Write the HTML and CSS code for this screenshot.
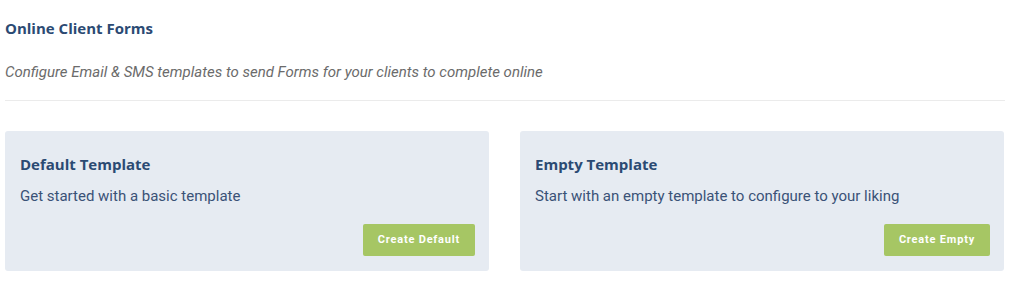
FILE: index.html
```html
<!DOCTYPE html>
<html>
<head>
<meta charset="utf-8">
<title>Online Client Forms</title>
<link rel="stylesheet" href="styles.css">
</head>
<body>
<div class="page">
	<h3 class="page-title">Online Client Forms</h3>
	<p class="page-desc">Configure Email &amp; SMS templates to send Forms for your clients to complete online</p>
	<div class="templates">
		<div class="tpl-card">
			<h4 class="tpl-title">Default Template</h4>
			<p class="tpl-text">Get started with a basic template</p>
			<div class="tpl-actions"><a href="javascript:void(0);" class="btn-green">Create Default</a></div>
		</div>
		<div class="tpl-card">
			<h4 class="tpl-title">Empty Template</h4>
			<p class="tpl-text">Start with an empty template to configure to your liking</p>
			<div class="tpl-actions"><a href="javascript:void(0);" class="btn-green">Create Empty</a></div>
		</div>
	</div>
</div>
</body>
</html>
```

FILE: styles.css
```css
body{margin:0;padding:0;background:#fff;font-family:Roboto,"Liberation Sans",sans-serif;}
h3,h4,p{margin:0;padding:0;}
.page{width:1000px;margin:0 0 0 5px;}
.page-title{font:bold 15px/20px "Open Sans",sans-serif;color:#2b4a73;padding-top:18px;}
.page-desc{font:italic 15px/20px Roboto,sans-serif;color:#6b6b6b;margin-top:24px;padding-bottom:18px;border-bottom:1px solid #ebebeb;}
.templates{display:flex;gap:31px;margin-top:30px;width:999px;}
.tpl-card{flex:1;background:#e6ebf2;border-radius:3px;padding:23px 14px 15px 15px;height:140px;box-sizing:border-box;display:flex;flex-direction:column;}
.tpl-title{font:bold 15px/20px "Open Sans",sans-serif;color:#2b4a73;}
.tpl-text{font:15px/20px Roboto,sans-serif;color:#3a5277;margin-top:12px;}
.tpl-actions{margin-top:auto;display:flex;justify-content:flex-end;}
.btn-green{display:block;background:#a6c664;color:#fff;font:bold 11px/32px Roboto,sans-serif;letter-spacing:0.8px;padding:0 15px;border-radius:2px;text-decoration:none;}
```
